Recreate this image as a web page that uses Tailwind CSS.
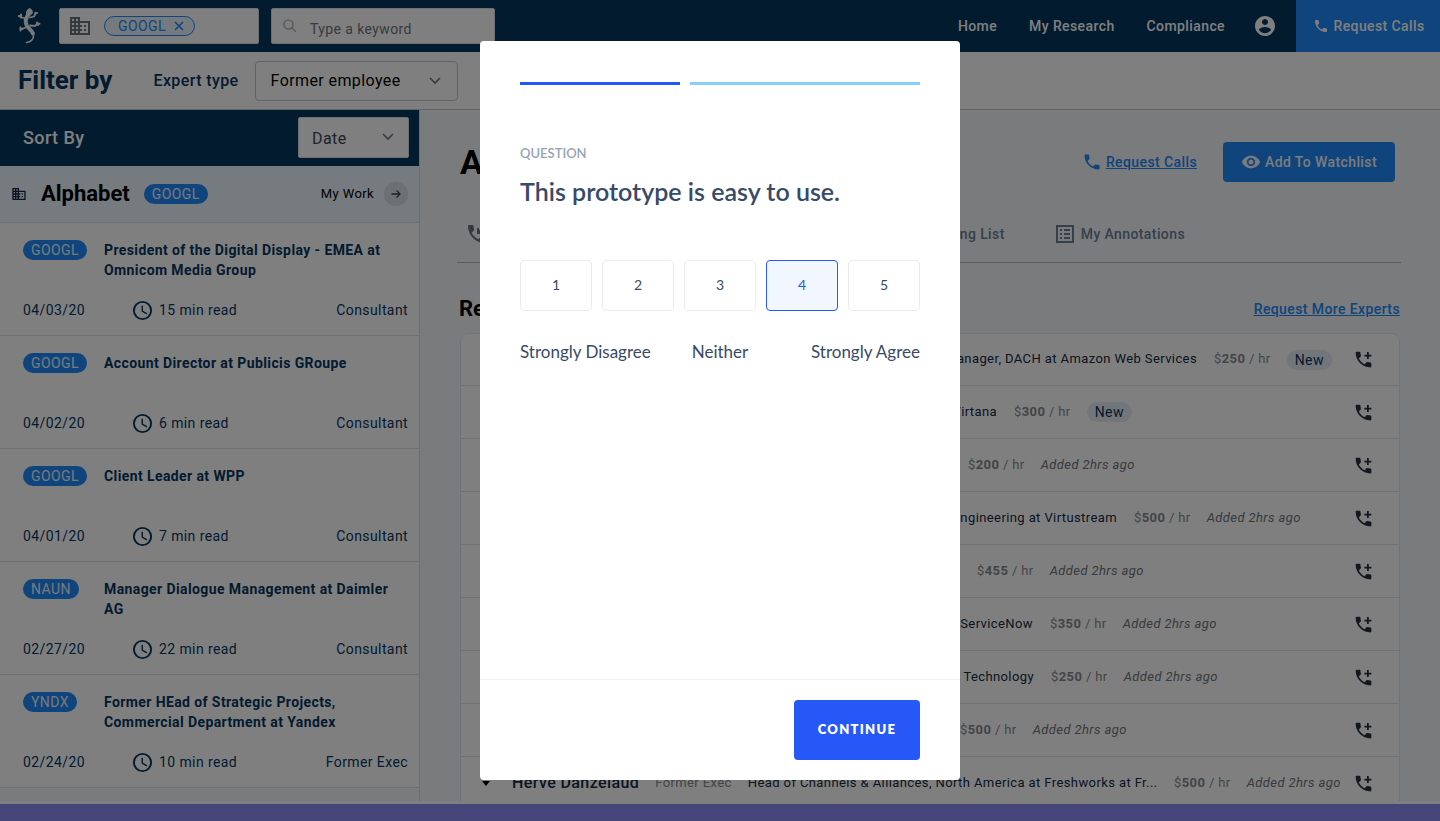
<!DOCTYPE html>
<html lang="en">
<head>
<meta charset="utf-8">
<title>Research library</title>
<script src="https://cdn.jsdelivr.net/npm/@tailwindcss/browser@4"></script>
</head>
<body class="h-screen overflow-hidden bg-white font-[Roboto,sans-serif] text-base tracking-wide text-[#06365f]">
<svg class="hidden" aria-hidden="true">
  <symbol id="company" viewBox="0 0 24 24"><path d="M12 7V3H2v18h20V7H12zM6 19H4v-2h2v2zm0-4H4v-2h2v2zm0-4H4V9h2v2zm0-4H4V5h2v2zm4 12H8v-2h2v2zm0-4H8v-2h2v2zm0-4H8V9h2v2zm0-4H8V5h2v2zm10 12h-8v-2h2v-2h-2v-2h2v-2h-2V9h8v10zm-2-8h-2v2h2v-2zm0 4h-2v2h2v-2z"/></symbol>
  <symbol id="call" viewBox="0 0 24 24"><path d="M6.62 10.79c1.44 2.83 3.76 5.14 6.59 6.59l2.2-2.2c.27-.27.67-.36 1.02-.24 1.12.37 2.33.57 3.57.57.55 0 1 .45 1 1V20c0 .55-.45 1-1 1-9.39 0-17-7.61-17-17 0-.55.45-1 1-1h3.5c.55 0 1 .45 1 1 0 1.25.2 2.45.57 3.57.11.35.03.74-.25 1.02l-2.2 2.2z"/></symbol>
  <symbol id="call-add" viewBox="0 0 24 24"><path d="M20 15.5c-1.25 0-2.45-.2-3.57-.57-.35-.12-.74-.03-1.02.24l-2.2 2.2c-2.83-1.44-5.15-3.75-6.59-6.58l2.2-2.21c.28-.27.36-.66.25-1.01C8.7 6.45 8.5 5.25 8.5 4c0-.55-.45-1-1-1H4c-.55 0-1 .45-1 1 0 9.39 7.61 17 17 17 .55 0 1-.45 1-1v-3.5c0-.55-.45-1-1-1zM21 6.500h-3v-3h-2v3h-3v2h3v3h2v-3h3z"/></symbol>
  <symbol id="call-in" viewBox="0 0 24 24"><path d="M20 15.5c-1.25 0-2.45-.2-3.57-.57-.35-.12-.74-.03-1.02.24l-2.2 2.2c-2.83-1.44-5.15-3.75-6.59-6.58l2.2-2.21c.28-.27.36-.66.25-1.01C8.7 6.45 8.5 5.25 8.5 4c0-.55-.45-1-1-1H4c-.55 0-1 .45-1 1 0 9.39 7.61 17 17 17 .55 0 1-.45 1-1v-3.5c0-.55-.45-1-1-1zM18 12v-2h-2.600L21 4.400 19.600 3 14 8.600V6h-2v6z"/></symbol>
  <symbol id="clock" viewBox="0 0 24 24"><path d="M12 2a10 10 0 1 0 0 20 10 10 0 0 0 0-20zm0 18a8 8 0 1 1 0-16 8 8 0 0 1 0 16zm.5-13H11v6l5.250 3.150.750-1.230-4.500-2.670z"/></symbol>
  <symbol id="chevron" viewBox="0 0 12 12"><path d="M1 3l5 5 5-5" fill="none" stroke="currentColor" stroke-width="1.6"/></symbol>
</svg>

<div class="flex h-full flex-col text-sm">
  <header class="flex h-13 shrink-0 items-center bg-[#06365f] pl-[17px] text-white">
    <a href="#" aria-label="Home page" class="mr-[17px]">
      <svg class="h-9 w-[25px]" viewBox="0 0 25 36" fill="none" stroke="#eef0f2" stroke-linecap="round" stroke-linejoin="round">
        <path d="M12.600 0C10.500 1 8.400 4 9 5.500c.4 1 2 1.800 3 2 1.500-.3 3.800-1.500 4-3C16 3 14.500.8 12.600 0z" fill="#eef0f2" stroke="none"/>
        <path d="M12 6C9 9 8 13 9.500 17c1.500 3.500 6.500 6 7 10.500.3 3.500-2.500 6.500-7 7" stroke-width="1.600"/>
        <path d="M12 6C9 9 8 13 9.500 17c1.300 3 5 5 6.500 8.500" stroke-width="4"/>
        <path d="M10.500 11L5 9.500 2.500 8.500M13 9.500l4-1 1.500-3M13 17.500l5 .5 2-2M10 19l-5 2" stroke-width="1.800"/>
        <path d="M1.800 8h2.500M4 6.500v3M20 14.500l1 2.500M20 15.800h2.500M3.500 19.500v3M3.500 20.800h2M18.500 5h1.500" stroke-width="2"/>
      </svg>
    </a>
    <div class="mr-3 flex h-9 w-50 items-center rounded-xs border border-[#d8dde3] bg-white pl-2 text-[#6b7480]">
      <svg class="mr-3 size-6 fill-current"><use href="#company"/></svg>
      <button class="flex h-5 items-center rounded-full border border-[#2088f8] bg-[#eaf4fd] pr-[10px] pl-[13px] leading-4 text-[#2088f8]">GOOGL
        <svg class="ml-2 size-[10px]" viewBox="0 0 10 10" stroke="currentColor" stroke-width="1.6"><path d="M1 1l8 8M9 1L1 9"/></svg>
      </button>
    </div>
    <label class="flex h-9 w-56 items-center rounded-xs border border-[#d8dde3] bg-white pl-[10px]">
      <svg class="mr-3 size-4" viewBox="0 0 16 16" fill="none" stroke="#b4b8be" stroke-width="1.6"><circle cx="6.500" cy="6.500" r="4.500"/><path d="M10 10l4 4"/></svg>
      <input type="text" aria-label="Keyword" placeholder="Type a keyword" class="w-40 pt-[6px] outline-none placeholder:text-[#70757d]">
    </label>
    <nav class="ml-auto flex h-full items-center font-medium">
      <a href="#" class="mr-8">Home</a>
      <a href="#" class="mr-8">My Research</a>
      <a href="#" class="mr-7">Compliance</a>
      <a href="#" aria-label="Account" class="mr-[19px]"><svg class="size-6 fill-current" viewBox="0 0 24 24"><path d="M12 2C6.480 2 2 6.480 2 12s4.480 10 10 10 10-4.480 10-10S17.520 2 12 2zm0 3c1.660 0 3 1.340 3 3s-1.340 3-3 3-3-1.340-3-3 1.340-3 3-3zm0 14.200c-2.500 0-4.710-1.280-6-3.220.030-1.990 4-3.080 6-3.080 1.990 0 5.970 1.090 6 3.080-1.290 1.940-3.500 3.220-6 3.220z"/></svg></a>
      <button class="flex h-full w-36 items-center justify-center gap-1 bg-[#2088f8] pl-[2px]"><svg class="size-4 fill-current"><use href="#call"/></svg>Request Calls</button>
    </nav>
  </header>

  <section class="flex h-[58px] shrink-0 items-center border-b border-[#c8cacc] bg-white pl-[18px]">
    <h2 class="mr-[41px] text-[26px] font-bold tracking-normal">Filter by</h2>
    <label for="expert" class="mr-4 text-base font-medium">Expert type</label>
    <div class="relative">
      <select id="expert" class="h-10 w-[203px] appearance-none rounded-sm border border-[#c3c7cc] bg-white px-[15px] text-base text-black"><option>Former employee</option></select>
      <svg class="pointer-events-none absolute top-[14px] right-[17px] size-3 text-[#6b7480]"><use href="#chevron"/></svg>
    </div>
  </section>

  <div class="flex min-h-0 flex-1 bg-[#f4f7fb]">
    <aside class="w-[420px] shrink-0 overflow-hidden border-r border-[#d8dde3]">
      <div class="flex h-14 items-center justify-between bg-[#06365f] pr-[10px] pb-px pl-[23px]">
        <label for="sort" class="text-lg font-medium text-white">Sort By</label>
        <div class="relative">
          <select id="sort" class="h-[41px] w-[111px] appearance-none rounded-xs border border-[#d8dde3] bg-white pt-[2px] pr-6 pl-[13px] text-base text-[#3c4654]"><option>Date</option></select>
          <svg class="pointer-events-none absolute top-[14px] right-[15px] size-3 text-[#6b7480]"><use href="#chevron"/></svg>
        </div>
      </div>
      <div class="flex h-[57px] items-center border-b border-[#d4e0e9] bg-[#eaf6ff] pr-[11px] pl-[11px] text-black">
        <svg class="mr-[14px] size-4 fill-[#142a45]"><use href="#company"/></svg>
        <h3 class="mr-[14px] text-[22px] font-bold tracking-normal">Alphabet</h3>
        <span class="rounded-full bg-[#2088f8] px-2 leading-5 text-[#eaf4fd]">GOOGL</span>
        <span class="mr-[10px] ml-auto text-[13px]">My Work</span>
        <button aria-label="Open my work" class="flex size-6 items-center justify-center rounded-full bg-[#d4e0e9]"><svg class="size-3" viewBox="0 0 12 12" fill="none" stroke="#3c4654" stroke-width="1.300"><path d="M1.500 6h8.500M6.500 2.500L10 6 6.500 9.500"/></svg></button>
      </div>
      <ul id="articles"></ul>
    </aside>

    <main class="min-w-0 flex-1 overflow-hidden pt-8 pr-10 pl-10">
      <div class="flex h-10 items-center justify-between pr-[5px]">
        <h1 class="text-[34px] font-bold tracking-normal text-black">Alphabet</h1>
        <div class="flex items-center font-medium">
          <a href="#" class="mr-[26px] flex items-center gap-1 text-[#2088f8]"><svg class="size-5 fill-current"><use href="#call"/></svg><span class="underline">Request Calls</span></a>
          <button class="flex h-10 w-43 items-center justify-center gap-1 rounded-sm bg-[#2088f8] text-[#f4f7fb]"><svg class="size-5 fill-current" viewBox="0 0 24 24"><path d="M12 4.500C7 4.500 2.730 7.610 1 12c1.730 4.390 6 7.500 11 7.500s9.270-3.110 11-7.500c-1.730-4.390-6-7.500-11-7.500zM12 17c-2.760 0-5-2.240-5-5s2.240-5 5-5 5 2.240 5 5-2.240 5-5 5zm0-8c-1.660 0-3 1.340-3 3s1.340 3 3 3 3-1.340 3-3-1.340-3-3-3z"/></svg>Add To Watchlist</button>
        </div>
      </div>
      <nav class="-mr-px -ml-[3px] flex h-[81px] items-center border-b border-[#b4b8be] pt-[24px] pr-54 pl-2 font-medium text-[#6a8094]">
        <a href="#" class="flex items-center gap-1"><svg class="size-6 fill-[#66727e]"><use href="#call-in"/></svg>Calls</a>
        <a href="#" class="ml-auto">Reading List</a>
        <a href="#" class="ml-12 flex items-center gap-1"><svg class="size-6 fill-current" viewBox="0 0 24 24"><path d="M3 3v18h18V3zm2 2h14v14H5zM11 7h6v2h-6zm0 4h6v2h-6zm0 4h6v2h-6zM7 7h2v2H7zm0 4h2v2H7zm0 4h2v2H7z"/></svg>My Annotations</a>
      </nav>
      <div class="-ml-px flex h-[70px] items-center justify-between pt-[22px]">
        <h2 class="text-[22px] font-bold tracking-normal text-black">Recommended Experts</h2>
        <a href="#" class="font-medium text-[#2088f8] underline">Request More Experts</a>
      </div>
      <ul id="experts" class="rounded-t-lg border border-[#e2e8ee] bg-white text-[#142a45]"></ul>
    </main>
  </div>
  <div class="h-[3px] shrink-0 bg-white"></div>
  <footer class="h-[17px] shrink-0 bg-[#8a8af4]"></footer>
</div>

<div class="fixed inset-0 flex items-center justify-center bg-black/50 font-[Lato,sans-serif] text-sm tracking-normal text-[#374a68]">
  <form role="dialog" aria-labelledby="question" class="flex h-[90vh] w-120 flex-col rounded-sm bg-white">
    <div class="flex-1 px-10 pt-[41px]">
      <div class="flex h-[3px] gap-[10px]"><div class="w-2/5 bg-[#2558f7]"></div><div class="flex-1 bg-[#82d0fb]"></div></div>
      <p class="mt-[58px] text-[13px] leading-5 font-semibold text-[#98a2b1]">QUESTION</p>
      <h2 id="question" class="mt-3 text-[25px] leading-8 font-semibold">This prototype is easy to use.</h2>
      <fieldset aria-label="Your answer" class="mt-[53px] grid grid-cols-5 gap-[10px]">
        <label class="flex h-[51px] cursor-pointer items-center justify-center rounded-sm border border-[#ececee] pb-[2px] has-checked:border-[#2558f7] has-checked:bg-[#f2f6ff] has-checked:text-[#2558f7]"><input type="radio" name="score" value="1" class="sr-only">1</label>
        <label class="flex h-[51px] cursor-pointer items-center justify-center rounded-sm border border-[#ececee] pb-[2px] has-checked:border-[#2558f7] has-checked:bg-[#f2f6ff] has-checked:text-[#2558f7]"><input type="radio" name="score" value="2" class="sr-only">2</label>
        <label class="flex h-[51px] cursor-pointer items-center justify-center rounded-sm border border-[#ececee] pb-[2px] has-checked:border-[#2558f7] has-checked:bg-[#f2f6ff] has-checked:text-[#2558f7]"><input type="radio" name="score" value="3" class="sr-only">3</label>
        <label class="flex h-[51px] cursor-pointer items-center justify-center rounded-sm border border-[#ececee] pb-[2px] has-checked:border-[#2558f7] has-checked:bg-[#f2f6ff] has-checked:text-[#2558f7]"><input type="radio" name="score" value="4" checked class="sr-only">4</label>
        <label class="flex h-[51px] cursor-pointer items-center justify-center rounded-sm border border-[#ececee] pb-[2px] has-checked:border-[#2558f7] has-checked:bg-[#f2f6ff] has-checked:text-[#2558f7]"><input type="radio" name="score" value="5" class="sr-only">5</label>
      </fieldset>
      <div class="mt-[29px] grid grid-cols-[1fr_auto_1fr] text-[17px] leading-6"><span>Strongly Disagree</span><span>Neither</span><span class="text-right">Strongly Agree</span></div>
    </div>
    <div class="flex justify-end border-t border-[#f1f2f4] px-10 py-5">
      <button type="button" class="h-[60px] w-[126px] rounded-sm bg-[#2558f7] pb-px text-[13px] font-extrabold tracking-widest text-white">CONTINUE</button>
    </div>
  </form>
</div>

<script>
const articles = [
  ['GOOGL', 'President of the Digital Display - EMEA at Omnicom Media Group', '04/03/20', 15, 'Consultant'],
  ['GOOGL', 'Account Director at Publicis GRoupe', '04/02/20', 6, 'Consultant'],
  ['GOOGL', 'Client Leader at WPP', '04/01/20', 7, 'Consultant'],
  ['NAUN', 'Manager Dialogue Management at Daimler AG', '02/27/20', 22, 'Consultant'],
  ['YNDX', 'Former HEad of Strategic Projects, Commercial Department at Yandex', '02/24/20', 10, 'Former Exec']
];
document.getElementById('articles').innerHTML = articles.map(([ticker, title, date, mins, role]) => `
  <li class="border-b border-[#d8dde3] bg-white pt-[17px] pr-[11px] pb-[15px] pl-[23px] leading-5">
    <div class="grid h-10 grid-cols-[81px_1fr] items-start">
      <div class="flex"><span class="rounded-full bg-[#2088f8] px-2 text-[#eaf4fd]">${ticker}</span></div>
      <h4 class="font-bold">${title}</h4>
    </div>
    <div class="mt-5 flex h-5 items-center">
      <span class="w-[108px]">${date}</span>
      <svg class="mr-[5px] size-[23px] fill-current"><use href="#clock"/></svg>
      <span>${mins} min read</span>
      <span class="ml-auto">${role}</span>
    </div>
  </li>`).join('');

// name, role, headline, rate, new?, width of the profile column
const experts = [
  ['Jonas Weber', 'Former Exec', 'Account Manager, DACH at Amazon Web Services', 250, true, 736],
  ['Maria Lopez', 'Former Exec', 'Head of Sales at Virtana', 300, true, 536],
  ['Alan Reed', 'Former Exec', 'Director at Dropbox', 200, false, 490],
  ['Kevin Shaw', 'Former Exec', 'Vice President of Engineering at Virtustream', 500, false, 656],
  ['Nina Patel', 'Former Exec', 'Director at Oracle', 455, false, 499],
  ['Paul Grant', 'Former Exec', 'Sales Director at ServiceNow', 350, false, 572],
  ['Lisa Chan', 'Former Exec', 'Vice President of Technology', 250, false, 573],
  ['Mark Olsen', 'Former Exec', 'Director at Cisco', 500, false, 482],
  ['Herve Danzelaud', 'Former Exec', 'Head of Channels &amp; Alliances, North America at Freshworks at Fr...', 500, false, 696]
];
document.getElementById('experts').innerHTML = experts.map(([name, role, headline, rate, fresh, width]) => `
  <li class="flex h-[53px] items-center border-b border-[#dfe3e8] pr-[25px] text-[13px] whitespace-nowrap first:h-13">
    <div class="flex items-center overflow-hidden pl-[21px]" style="width:${width}px">
      <svg class="mr-[22px] h-[5px] w-2 shrink-0 fill-black" viewBox="0 0 8 5"><path d="M0 0h8L4 5z"/></svg>
      <span class="mr-4 text-base font-medium">${name}</span>
      <span class="mr-4 text-[#858a91]">${role}</span>
      <span class="ml-auto">${headline}</span>
    </div>
    <span class="ml-[17px] text-[#858a91]">$<b>${rate}</b> / hr</span>
    ${fresh
      ? '<span class="ml-4 rounded-full bg-[#e4ebf2] px-2 text-sm leading-5 text-[#06365f]">New</span>'
      : '<i class="ml-4 text-[#70757d]">Added 2hrs ago</i>'}
    <button aria-label="Request a call" class="ml-auto"><svg class="size-[21px] fill-[#26303c]"><use href="#call-add"/></svg></button>
  </li>`).join('');
</script>
</body>
</html>
